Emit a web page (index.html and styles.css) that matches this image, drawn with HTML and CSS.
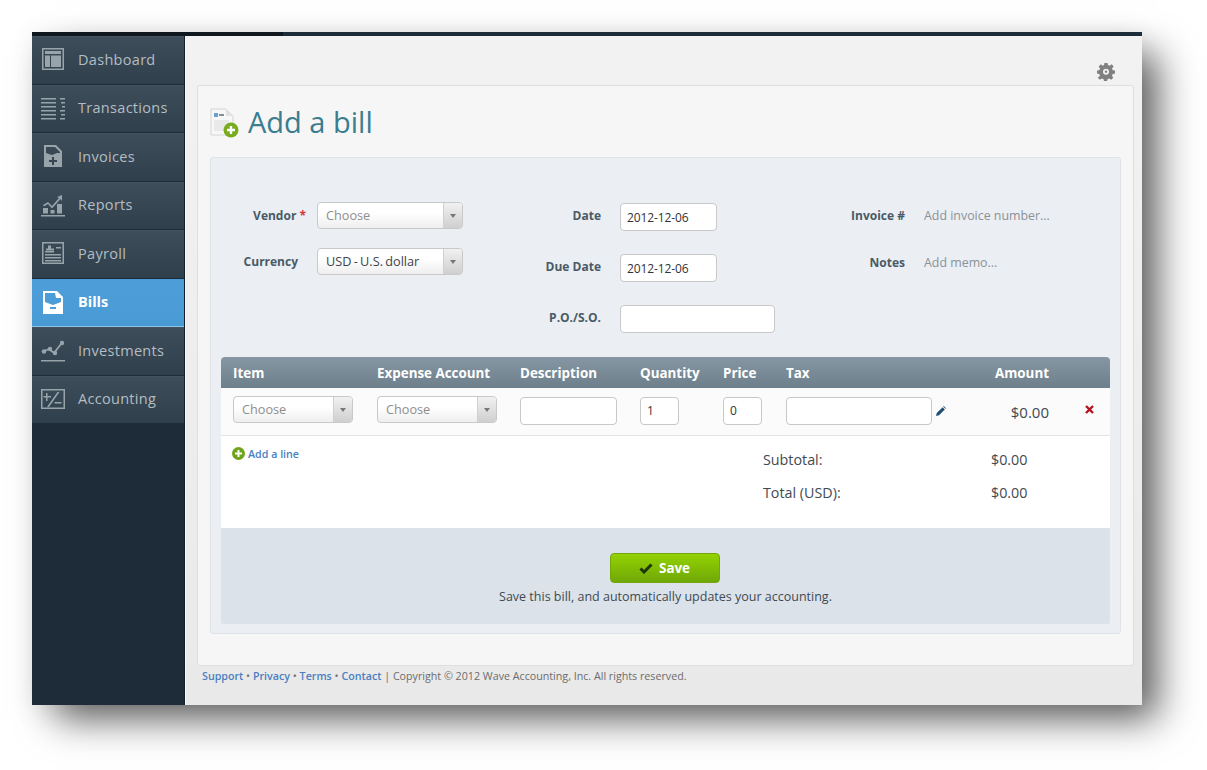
FILE: index.html
```html
<!DOCTYPE html>
<html lang="en">
<head>
<meta charset="utf-8">
<title>Add a bill</title>
<link rel="stylesheet" href="styles.css">
</head>
<body>
<div class="window">
  <div class="topbar"></div>
  <div class="app">
    <nav class="sidebar">
      <a class="nav-item"><svg class="nav-icon" viewBox="0 0 24 24"><path fill-rule="evenodd" d="M1 1h22v22H1zM2.500 2.500v19h19v-19zM4 4h16v3H4zM4 8.500h5V20H4zM10 8.500h10V20H10z"/></svg><span>Dashboard</span></a>
      <a class="nav-item"><svg class="nav-icon" viewBox="0 0 24 24"><path d="M0 2h15v1.500H0zM0 6h15v1.500H0zM0 10h15v1.500H0zM0 14h15v1.500H0zM0 18h15v1.500H0zM0 22h15v1.500H0zM19 2h5v1.500h-5zM20 6h4v1.500h-4zM21 10h3v1.500h-3zM19 14h5v1.500h-5zM20 18h4v1.500h-4zM19 22h5v1.500h-5z"/></svg><span>Transactions</span></a>
      <a class="nav-item"><svg class="nav-icon" viewBox="0 0 24 24"><path fill-rule="evenodd" d="M3 1h12l6 6v16H3zM5 3v6l6 2 5-2h3V8l-5-5zM11 13v3H8v2h3v3h2v-3h3v-2h-3v-3z"/></svg><span>Invoices</span></a>
      <a class="nav-item"><svg class="nav-icon" viewBox="0 0 24 24"><path d="M0 22h24v1.500H0zM2 15h5v5.500H2zM9.500 17h4v3.500h-4zM16 11h5v9.500h-5zM2 12l5-3 4 4 7-8-2-1 5-2v6l-1.500-2L11 15.500 7 11l-4 2.500z"/></svg><span>Reports</span></a>
      <a class="nav-item"><svg class="nav-icon" viewBox="0 0 24 24"><path fill-rule="evenodd" d="M1 1h22v22H1zM2.500 2.500v19h19v-19zM4 13h16v1.500H4zM4 16h16v1.500H4zM4 19h16v1.500H4zM4 10h9v1.500H4zM7 4.500h3v3h3v2H5v-2h2zM15 6h5v1.500h-5z"/></svg><span>Payroll</span></a>
      <a class="nav-item active"><svg class="nav-icon" viewBox="0 0 24 24"><path fill-rule="evenodd" d="M2 1h14l6 6v17H2zM4 3v9l8 3 8-3V8h-5l-1-5zM9 17v2h6v-2z"/></svg><span>Bills</span></a>
      <a class="nav-item"><svg class="nav-icon" viewBox="0 0 24 24"><path d="M0 22h24v1.500H0z"/><path class="nav-line" d="M1 14l7-3 5 4 7-9"/><circle cx="3" cy="13.500" r="2.200"/><circle cx="9" cy="11" r="2.200"/><circle cx="14" cy="15" r="2.200"/><circle cx="21" cy="5" r="2.200"/></svg><span>Investments</span></a>
      <a class="nav-item"><svg class="nav-icon" viewBox="0 0 24 24"><path fill-rule="evenodd" d="M0 2h24v20H0zM1.500 3.500v17h21v-17zM5 6h1.500v3H10v1.500H6.500V14H5v-3.500H2.500V9H5zM16.500 5h2L8 20H6zM13.500 15h7v1.500h-7z"/></svg><span>Accounting</span></a>
    </nav>
    <main class="main">
      <div class="gear-row">
        <svg class="gear" viewBox="0 0 24 24"><path fill-rule="evenodd" d="M10 1h4l.6 3 2.300 1 2.600-1.700 2.800 2.800L20 8.700l1 2.300 3 .6v4l-3 .6-1 2.300 1.700 2.600-2.800 2.800-2.600-1.700-2.300 1-.6 3h-4l-.6-3-2.300-1-2.600 1.700-2.800-2.800L4 18.500 3 16.200l-3-.6v-4l3-.6 1-2.300-1.700-2.600 2.800-2.800L7.700 5l1.700-1zM12 9a4 4 0 1 0 0 8 4 4 0 0 0 0-8z" transform="translate(0 -1.500)"/><circle cx="12" cy="11.500" r="1.600"/></svg>
      </div>
      <section class="card">
        <header class="title-row">
          <svg class="title-icon" width="31" height="31" viewBox="0 0 31 31">
            <path d="M2 1h15l7 7v19H2z" fill="#f7f7f7" stroke="#d4d4d4"/>
            <path d="M17 1v7h7z" fill="#e2e2e2"/>
            <rect x="5" y="5" width="4" height="4" fill="#6d9fd0"/>
            <path d="M10 7h5" stroke="#34495a" stroke-width="1.200"/>
            <rect x="5" y="12" width="15" height="11" fill="#e9e9e9"/>
            <circle cx="22" cy="22" r="7.500" fill="#78ab1e"/>
            <path d="M22 18v8M18 22h8" stroke="#fff" stroke-width="2.400"/>
          </svg>
          <h1>Add a bill</h1>
        </header>
        <div class="panel">
          <div class="form-grid">
            <div class="form-col col-a">
              <div class="field"><label class="label">Vendor <em>*</em></label><div class="select wide placeholder"><span>Choose</span><i class="arrow"></i></div></div>
              <div class="field"><label class="label">Currency</label><div class="select wide"><span>USD - U.S. dollar</span><i class="arrow"></i></div></div>
            </div>
            <div class="form-col col-b">
              <div class="field"><label class="label">Date</label><div class="input date">2012-12-06</div></div>
              <div class="field"><label class="label">Due Date</label><div class="input date">2012-12-06</div></div>
              <div class="field"><label class="label">P.O./S.O.</label><div class="input po"></div></div>
            </div>
            <div class="form-col col-c">
              <div class="field"><label class="label">Invoice #</label><span class="hint">Add invoice number...</span></div>
              <div class="field"><label class="label">Notes</label><span class="hint">Add memo...</span></div>
            </div>
          </div>
          <div class="bill-table">
            <div class="table-head">
              <span>Item</span><span>Expense Account</span><span>Description</span><span>Quantity</span><span>Price</span><span>Tax</span><span class="amount-head">Amount</span><span></span>
            </div>
            <div class="table-row">
              <div class="select item placeholder"><span>Choose</span><i class="arrow"></i></div>
              <div class="select item placeholder"><span>Choose</span><i class="arrow"></i></div>
              <div class="input desc"></div>
              <div class="input qty">1</div>
              <div class="input qty">0</div>
              <div class="tax-cell"><div class="input tax"></div><svg class="pencil" width="10" height="10" viewBox="0 0 10 10"><path d="M0 10l.8-3L6.600 1.200l2.200 2.200L3 9.200zM7.200.6l.6-.6 2.200 2.200-.6.6z"/></svg></div>
              <div class="amount">$0.00</div>
              <svg class="remove" width="9" height="9" viewBox="0 0 9 9"><path d="M1 1l7 7M8 1L1 8"/></svg>
            </div>
            <div class="table-body">
              <a class="add-line"><svg width="13" height="13" viewBox="0 0 13 13"><circle cx="6.500" cy="6.500" r="6.500" fill="#6ea31a"/><path d="M6.500 3v7M3 6.500h7" stroke="#fff" stroke-width="2"/></svg>Add a line</a>
              <dl class="totals">
                <div class="total-row"><dt>Subtotal:</dt><dd>$0.00</dd></div>
                <div class="total-row"><dt>Total (USD):</dt><dd>$0.00</dd></div>
              </dl>
            </div>
            <div class="save-area">
              <button class="save-btn"><svg width="14" height="11" viewBox="0 0 14 11"><path d="M1.500 5.500l3.500 3.500 7.500-7.500" fill="none" stroke="#1f3608" stroke-width="3"/></svg>Save</button>
              <p>Save this bill, and automatically updates your accounting.</p>
            </div>
          </div>
        </div>
      </section>
      <footer class="footer"><a>Support</a> • <a>Privacy</a> • <a>Terms</a> • <a>Contact</a> | Copyright © 2012 Wave Accounting, Inc. All rights reserved.</footer>
    </main>
  </div>
</div>
</body>
</html>
```
FILE: styles.css
```css
* { box-sizing: border-box; }
html, body { margin: 0; height: 100%; background: #fff; overflow: hidden; }
body { font-family: "Open Sans", "Liberation Sans", sans-serif; font-size: 13px; color: #3f4a52; }

.window {
  width: 1110px;
  height: 673px;
  margin: 32px 0 0 32px;
  display: flex;
  flex-direction: column;
  box-shadow: 20px 18px 36px -4px rgba(0,0,0,.62), 0 6px 26px rgba(0,0,0,.08);
}
.topbar { height: 4px; flex: none; background: linear-gradient(90deg, #10181f 0 251px, #1c2c39 251px); }
.app { flex: 1; display: flex; min-height: 0; }

.sidebar { width: 153px; flex: none; background: #1d2c38; border-right: 1px solid #14202a; }
.nav-item {
  height: 48.500px;
  display: flex;
  align-items: center;
  gap: 13px;
  padding-left: 9px;
  padding-bottom: 2px;
  color: #b4bdc3;
  font-size: 14.500px;
  letter-spacing: .3px;
  background: linear-gradient(#3d4e5a, #2f3f4b);
  border-top: 1px solid #44545f;
  border-bottom: 1px solid #1e2c36;
}
.nav-item svg.nav-icon { width: 24px; height: 24px; flex: none; fill: #98a3aa; }
.nav-line { fill: none; stroke: #98a3aa; stroke-width: 1.800; }
.nav-item.active {
  background: linear-gradient(#4e9fd9, #489ad5);
  border-top: 1px solid #4a9bd6;
  border-bottom: 1px solid #8cc3e8;
  color: #fff;
  font-weight: 700;
  letter-spacing: 0;
}
.nav-item.active svg.nav-icon { fill: #fff; }

.main {
  flex: 1;
  min-width: 0;
  display: flex;
  flex-direction: column;
  padding: 0 8px 0 11px;
  background: linear-gradient(#f2f2f2, #e9e9e9);
  border-left: 1px solid #f7f7f7;
}
.gear-row { height: 49px; flex: none; display: flex; justify-content: flex-end; align-items: flex-end; padding: 0 19px 4px 0; }
.gear { width: 18px; height: 18px; fill: #808080; }

.card {
  height: 581px;
  flex: none;
  padding: 0 12px;
  background: #f6f6f6;
  border: 1px solid #dedede;
  border-radius: 3px;
}
.title-row { height: 71px; display: flex; align-items: center; gap: 8px; margin-left: -1px; }
.title-row h1 { margin: 0; font-size: 29px; font-weight: 400; color: #3a7d8f; line-height: 1; }
.title-icon { flex: none; margin-top: 3px; }

.panel {
  height: 477px;
  padding: 0 10px 9px;
  background: #ebeef3;
  border: 1px solid #dfe2e6;
  border-radius: 3px;
  display: flex;
  flex-direction: column;
}
.form-grid { height: 199px; flex: none; padding-top: 44px; display: flex; }
.form-col { display: flex; flex-direction: column; }
.col-a { width: 324px; gap: 19px; }
.col-a .label { width: 77px; margin-right: 19px; }
.col-b { width: 270px; gap: 23px; padding-top: 1px; }
.col-b .label { width: 56px; margin-right: 19px; margin-bottom: 3px; }
.col-c { flex: 1; gap: 20px; }
.col-c .label { width: 90px; margin-right: 19px; }
.field { display: flex; align-items: center; min-height: 27px; }
.label { text-align: right; font-size: 12px; font-weight: 700; color: #4a5a66; flex: none; white-space: nowrap; }
.label em { font-style: normal; color: #d3373c; }
.col-a .label em { margin-right: -8px; }
.hint { color: #8a9299; font-size: 12.400px; }

.select {
  display: flex;
  align-items: center;
  height: 27px;
  padding-left: 8px;
  background: linear-gradient(#fff 40%, #eeeeee);
  border: 1px solid #c9c9c9;
  border-radius: 4px;
  color: #3c444a;
  font-size: 12.700px;
  word-spacing: -1px;
  position: relative;
  overflow: hidden;
}
.select span { flex: 1; padding-bottom: 2px; }
.select.placeholder { color: #8e8e8e; }
.select.wide { width: 146px; }
.select.item { width: 120px; margin-top: -2px; }
.arrow {
  flex: none;
  width: 19px;
  align-self: stretch;
  background: linear-gradient(#f1f1f1, #cfcfcf);
  border-left: 1px solid #d0d0d0;
  display: flex;
  align-items: center;
  justify-content: center;
}
.arrow::after { content: ""; border: 3.500px solid transparent; border-top: 4px solid #777; border-bottom: 0; }

.input {
  display: flex;
  align-items: center;
  height: 28px;
  padding: 0 0 0 6px;
  background: #fff;
  border: 1px solid #c8c8c8;
  border-radius: 4px;
  color: #333;
  font-size: 12px;
  letter-spacing: -.1px;
}
.input.date { width: 97px; }
.input.po { width: 155px; }
.input.desc { width: 97px; }
.input.qty { width: 39px; }
.input.tax { width: 146px; }

.bill-table { flex: 1; display: flex; flex-direction: column; min-height: 0; }
.table-head, .table-row {
  display: grid;
  grid-template-columns: 144px 143px 120px 83px 63px 189px 74px 1fr;
  padding-left: 12px;
  align-items: center;
}
.table-head {
  height: 31px;
  flex: none;
  background: linear-gradient(#8697a3, #6d7f8b);
  border-radius: 4px 4px 0 0;
  color: #fff;
  font-weight: 700;
  font-size: 13.400px;
}
.amount-head { text-align: right; }
.table-row { height: 48px; flex: none; background: #fbfbfb; border-bottom: 1px solid #e2e2e2; padding-bottom: 2px; }
.tax-cell { display: flex; align-items: center; gap: 4px; }
.pencil { fill: #1f4c74; }
.amount { text-align: right; font-size: 15px; padding-top: 2px; }
.remove { justify-self: start; margin-left: 36px; margin-top: -2px; fill: none; stroke: #b3131f; stroke-width: 2.400; }

.table-body { height: 92px; flex: none; background: #fff; padding: 11px 12px 0; display: flex; }
.add-line { width: 531px; height: 16px; margin-left: -1px; display: flex; align-items: flex-start; gap: 3px; color: #4a7fc1; font-size: 10.700px; font-weight: 600; flex: none; }
.totals { margin: 3px 0 0; }
.total-row { display: flex; height: 33px; font-size: 14.300px; }
.total-row dt { width: 228px; }
.total-row dd { margin: 0; }

.save-area {
  flex: 1;
  background: #dbe2ea;
  border-radius: 0 0 3px 3px;
  display: flex;
  flex-direction: column;
  align-items: center;
  padding-top: 25px;
}
.save-btn {
  width: 110px;
  height: 30px;
  margin-left: -2px;
  display: flex;
  align-items: center;
  justify-content: center;
  gap: 6px;
  background: linear-gradient(#93d202, #6fa807);
  border: 1px solid #74a60c;
  border-radius: 4px;
  color: #fff;
  font: 700 13.400px "Open Sans", sans-serif;
  padding: 0;
}
.save-area p { margin: 5px 0 0; font-size: 12.500px; color: #3f4a52; }

.footer { padding: 3px 0 0 5px; font-size: 10.700px; color: #6c6c6c; white-space: nowrap; }
.footer a { color: #4a7fc1; font-weight: 600; }
```
